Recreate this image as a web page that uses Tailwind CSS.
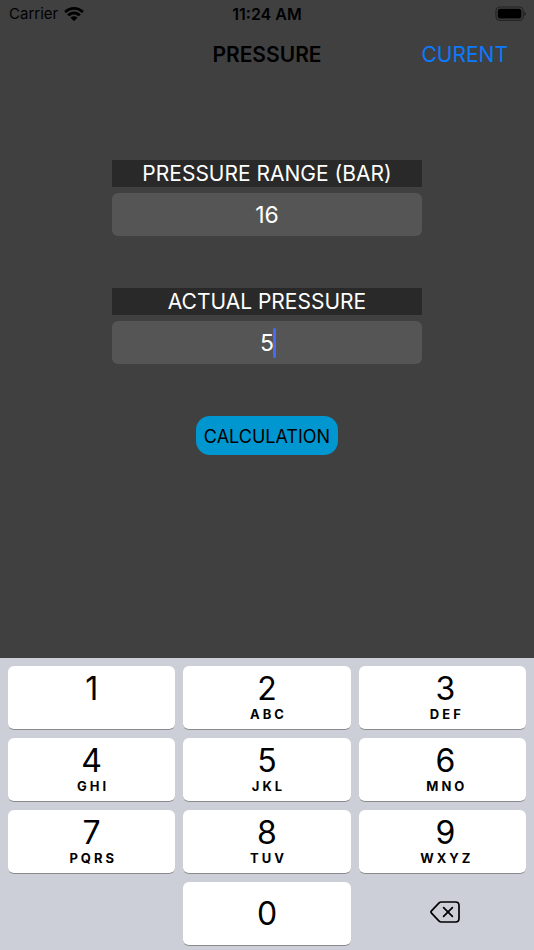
<!DOCTYPE html>
<html lang="en">
<head>
  <meta charset="UTF-8" />
  <meta name="viewport" content="width=device-width, initial-scale=1" />
  <title>Pressure</title>
  <script src="https://cdn.jsdelivr.net/npm/@tailwindcss/browser@4"></script>
</head>
<body class="bg-[#404040] font-['Inter',sans-serif] text-black min-h-screen flex flex-col">
  <!-- Status bar -->
  <div class="grid grid-cols-3 items-center h-7 px-2 text-[15px]">
    <div class="flex items-center gap-1.5 pl-px">
      <span>Carrier</span>
      <svg class="w-5 h-4" viewBox="0 0 20 16">
        <path d="M10 1C6.300 1 3 2.400.500 4.700q-.4.400 0 .8l1.200 1.200q.4.400.8 0C4.600 4.800 7.200 3.800 10 3.800s5.400 1 7.500 2.900q.4.400.8 0l1.200-1.200q.4-.4 0-.8C17 2.400 13.700 1 10 1z" />
        <path d="M10 5.600c-2.500 0-4.700.9-6.400 2.500q-.4.400 0 .8l1.300 1.200q.4.300.8 0C6.900 9 8.400 8.400 10 8.400s3.100.6 4.300 1.700q.4.300.8 0l1.300-1.200q.4-.4 0-.8C14.700 6.500 12.500 5.600 10 5.600z" />
        <path d="M10 10.200c-1.200 0-2.300.4-3.200 1.100q-.4.400 0 .8l2.800 2.700q.4.400.8 0l2.800-2.700q.4-.4 0-.8c-.9-.7-2-1.100-3.200-1.100z" />
      </svg>
    </div>
    <span class="text-center text-base font-semibold">11:24 AM</span>
    <svg class="justify-self-end w-[31px] h-4" viewBox="0 0 31 16">
      <rect x="1" y="1" width="27.2" height="13.4" rx="4" fill="none" stroke="#000" stroke-opacity="0.45" stroke-width="1.2" />
      <rect x="2.800" y="2.800" width="23.600" height="9.800" rx="2.400" />
      <path d="M29.400 5.400c2 .8 2 3.800 0 4.600z" fill-opacity="0.5" />
    </svg>
  </div>

  <!-- Navigation bar -->
  <header class="grid grid-cols-3 items-center h-[54px] px-[26px] text-[21px]">
    <h1 class="col-start-2 text-center font-semibold">PRESSURE</h1>
    <a href="#" class="justify-self-end text-[#0a7aff]">CURENT</a>
  </header>

  <main class="grow px-28 pt-[78px]">
    <form class="flex flex-col gap-[52px]">
      <div class="flex flex-col gap-1.5">
        <label for="range" class="bg-[#292929] text-white text-center text-[21px] leading-[27px]">PRESSURE RANGE (BAR)</label>
        <input id="range" type="text" inputmode="numeric" value="16" class="w-full h-[43px] rounded-md bg-[#555555] text-white text-center text-[23px] outline-none" />
      </div>
      <div class="flex flex-col gap-1.5">
        <label for="actual" class="bg-[#292929] text-white text-center text-[21px] leading-[27px]">ACTUAL PRESSURE</label>
        <div class="relative">
          <input id="actual" type="text" inputmode="numeric" value="5" class="block w-full h-[43px] rounded-md bg-[#555555] text-white text-center text-[23px] outline-none caret-transparent" />
          <span class="absolute left-1/2 top-[7px] ml-[6px] w-[3px] h-[30px] rounded-full bg-[#466bf2]"></span>
        </div>
      </div>
      <button type="button" class="self-center h-[39px] pt-0.5 px-2 rounded-[14px] bg-[#0096cf] text-[18px] whitespace-nowrap">CALCULATION</button>
    </form>
  </main>

  <!-- Number pad -->
  <div class="grid grid-cols-3 gap-2 px-2 pt-2 pb-1 bg-[#cccfd7]">
    <button type="button" class="flex flex-col items-center h-16 pt-1.5 rounded-md bg-white border-b border-[#898a8d]">
      <span class="text-[32px] leading-[34px]">1</span>
    </button>
    <button type="button" class="flex flex-col items-center h-16 pt-1.5 rounded-md bg-white border-b border-[#898a8d]">
      <span class="text-[32px] leading-[34px]">2</span>
      <span class="pl-[3px] text-[13px] leading-4 font-bold tracking-[3px]">ABC</span>
    </button>
    <button type="button" class="flex flex-col items-center h-16 pt-1.5 pl-1.5 rounded-md bg-white border-b border-[#898a8d]">
      <span class="text-[32px] leading-[34px]">3</span>
      <span class="pl-[3px] text-[13px] leading-4 font-bold tracking-[3px]">DEF</span>
    </button>
    <button type="button" class="flex flex-col items-center h-16 pt-1.5 rounded-md bg-white border-b border-[#898a8d]">
      <span class="text-[32px] leading-[34px]">4</span>
      <span class="pl-[3px] text-[13px] leading-4 font-bold tracking-[3px]">GHI</span>
    </button>
    <button type="button" class="flex flex-col items-center h-16 pt-1.5 rounded-md bg-white border-b border-[#898a8d]">
      <span class="text-[32px] leading-[34px]">5</span>
      <span class="pl-[3px] text-[13px] leading-4 font-bold tracking-[3px]">JKL</span>
    </button>
    <button type="button" class="flex flex-col items-center h-16 pt-1.5 pl-1.5 rounded-md bg-white border-b border-[#898a8d]">
      <span class="text-[32px] leading-[34px]">6</span>
      <span class="pl-[3px] text-[13px] leading-4 font-bold tracking-[3px]">MNO</span>
    </button>
    <button type="button" class="flex flex-col items-center h-16 pt-1.5 rounded-md bg-white border-b border-[#898a8d]">
      <span class="text-[32px] leading-[34px]">7</span>
      <span class="pl-[3px] text-[13px] leading-4 font-bold tracking-[3px]">PQRS</span>
    </button>
    <button type="button" class="flex flex-col items-center h-16 pt-1.5 rounded-md bg-white border-b border-[#898a8d]">
      <span class="text-[32px] leading-[34px]">8</span>
      <span class="pl-[3px] text-[13px] leading-4 font-bold tracking-[3px]">TUV</span>
    </button>
    <button type="button" class="flex flex-col items-center h-16 pt-1.5 pl-1.5 rounded-md bg-white border-b border-[#898a8d]">
      <span class="text-[32px] leading-[34px]">9</span>
      <span class="pl-[3px] text-[13px] leading-4 font-bold tracking-[3px]">WXYZ</span>
    </button>
    <button type="button" class="col-start-2 flex items-center justify-center h-16 rounded-md bg-white border-b border-[#898a8d]">
      <span class="text-[32px] leading-[34px]">0</span>
    </button>
    <button type="button" aria-label="Delete" class="flex items-center justify-center h-16 pb-1 pl-1.5">
      <svg class="w-[30px] h-[22px]" viewBox="0 0 30 22" fill="none" stroke="currentColor" stroke-width="1.7" stroke-linecap="round" stroke-linejoin="round">
        <path d="M11.2 1H25.6Q29 1 29 4.4V17.6Q29 21 25.6 21H11.2Q10 21 9.1 20.1L1.500 12.200Q.5 11 1.500 9.800L9.100 1.900Q10 1 11.200 1z" />
        <path d="M13.600 6.600l8.800 8.800M22.400 6.600l-8.800 8.800" />
      </svg>
    </button>
  </div>
</body>
</html>
